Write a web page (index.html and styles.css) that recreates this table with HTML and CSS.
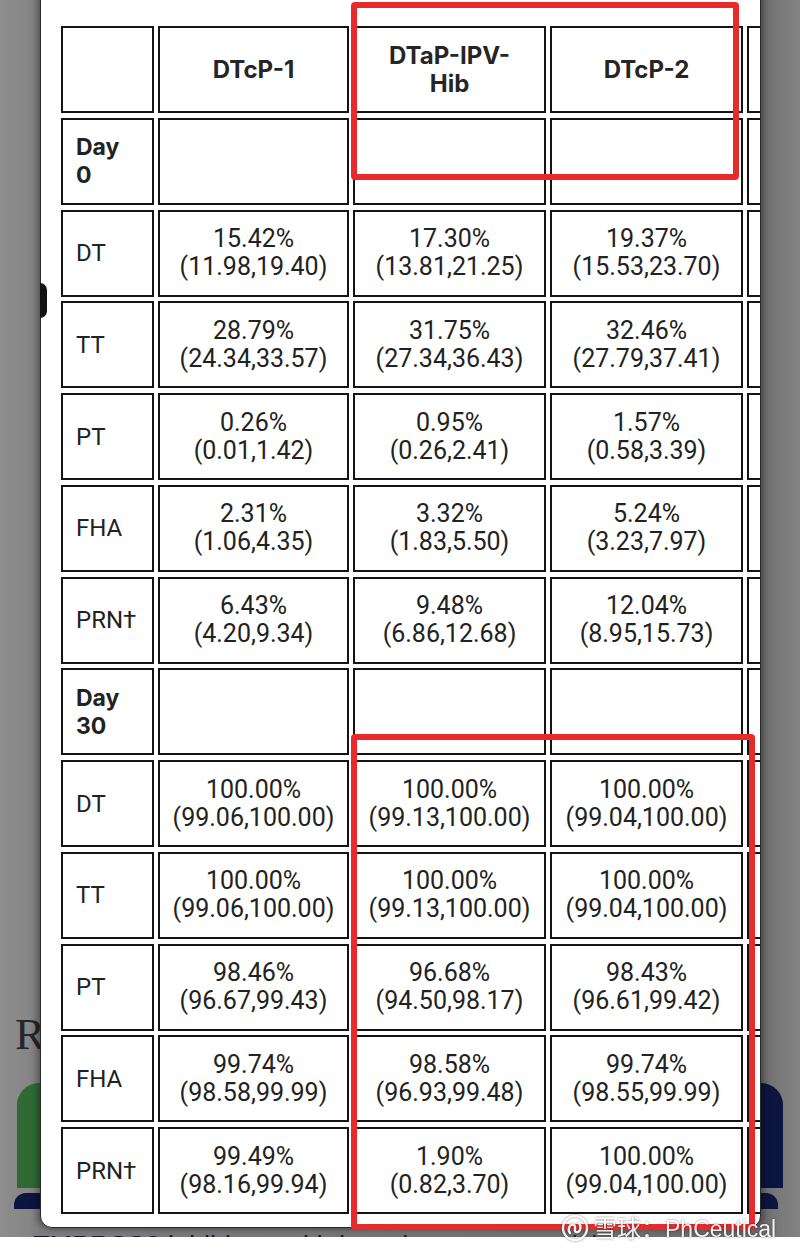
FILE: index.html
```html
<!DOCTYPE html>
<html lang="en">
<head>
<meta charset="utf-8">
<title>Seroresponse table</title>
<link rel="stylesheet" href="styles.css">
</head>
<body>
<div class="screen">
  <div class="page">
    <h2 class="page-title">Results</h2>
    <div class="cards">
      <div class="card card-green"></div>
      <div class="card card-navy"></div>
    </div>
    <div class="bars">
      <div class="bar bar-left"></div>
      <div class="bar bar-right"></div>
    </div>
    <p class="page-text">TMPRSS2 inhibitors with broad-spectrum activity</p>
  </div>

  <div class="modal">
    <div class="grid">
      <div class="cell head"></div>
      <div class="cell head">DTcP-1</div>
      <div class="cell head">DTaP-IPV-<wbr>Hib</div>
      <div class="cell head">DTcP-2</div>
      <div class="cell head"></div>

      <div class="cell label strong">Day<br>0</div>
      <div class="cell"></div><div class="cell"></div><div class="cell"></div><div class="cell"></div>

      <div class="cell label">DT</div>
      <div class="cell val">15.42%<br>(11.98,19.40)</div>
      <div class="cell val">17.30%<br>(13.81,21.25)</div>
      <div class="cell val">19.37%<br>(15.53,23.70)</div>
      <div class="cell"></div>

      <div class="cell label">TT</div>
      <div class="cell val">28.79%<br>(24.34,33.57)</div>
      <div class="cell val">31.75%<br>(27.34,36.43)</div>
      <div class="cell val">32.46%<br>(27.79,37.41)</div>
      <div class="cell"></div>

      <div class="cell label">PT</div>
      <div class="cell val">0.26%<br>(0.01,1.42)</div>
      <div class="cell val">0.95%<br>(0.26,2.41)</div>
      <div class="cell val">1.57%<br>(0.58,3.39)</div>
      <div class="cell"></div>

      <div class="cell label">FHA</div>
      <div class="cell val">2.31%<br>(1.06,4.35)</div>
      <div class="cell val">3.32%<br>(1.83,5.50)</div>
      <div class="cell val">5.24%<br>(3.23,7.97)</div>
      <div class="cell"></div>

      <div class="cell label">PRN†</div>
      <div class="cell val">6.43%<br>(4.20,9.34)</div>
      <div class="cell val">9.48%<br>(6.86,12.68)</div>
      <div class="cell val">12.04%<br>(8.95,15.73)</div>
      <div class="cell"></div>

      <div class="cell label strong">Day<br>30</div>
      <div class="cell"></div><div class="cell"></div><div class="cell"></div><div class="cell"></div>

      <div class="cell label">DT</div>
      <div class="cell val">100.00%<br>(99.06,100.00)</div>
      <div class="cell val">100.00%<br>(99.13,100.00)</div>
      <div class="cell val">100.00%<br>(99.04,100.00)</div>
      <div class="cell"></div>

      <div class="cell label">TT</div>
      <div class="cell val">100.00%<br>(99.06,100.00)</div>
      <div class="cell val">100.00%<br>(99.13,100.00)</div>
      <div class="cell val">100.00%<br>(99.04,100.00)</div>
      <div class="cell"></div>

      <div class="cell label">PT</div>
      <div class="cell val">98.46%<br>(96.67,99.43)</div>
      <div class="cell val">96.68%<br>(94.50,98.17)</div>
      <div class="cell val">98.43%<br>(96.61,99.42)</div>
      <div class="cell"></div>

      <div class="cell label">FHA</div>
      <div class="cell val">99.74%<br>(98.58,99.99)</div>
      <div class="cell val">98.58%<br>(96.93,99.48)</div>
      <div class="cell val">99.74%<br>(98.55,99.99)</div>
      <div class="cell"></div>

      <div class="cell label">PRN†</div>
      <div class="cell val">99.49%<br>(98.16,99.94)</div>
      <div class="cell val">1.90%<br>(0.82,3.70)</div>
      <div class="cell val">100.00%<br>(99.04,100.00)</div>
      <div class="cell"></div>
    </div>
  </div>

  <div class="knob"></div>
  <div class="mark mark-top"></div>
  <div class="mark mark-bottom"></div>
</div>
<div class="bottom-strip"></div>

<div class="watermark">
  <svg class="wm-logo" viewBox="0 0 28 28" width="28" height="28" aria-hidden="true">
    <circle cx="14" cy="14" r="12" fill="none" stroke="#fff" stroke-width="2.4"/>
    <path d="M9 19 C6 15 9 9 13 11 C16 13 12 17 15 18 C19 19 21 13 18 9" fill="none" stroke="#fff" stroke-width="2.4" stroke-linecap="round"/>
  </svg>
  <span class="wm-text">雪球：<span class="wm-latin">PhCeutical</span></span>
</div>
</body>
</html>
```

FILE: styles.css
```css
* { box-sizing: border-box; }

html, body {
  margin: 0;
  padding: 0;
  background: #ffffff;
}

body {
  position: relative;
  width: 800px;
  font-family: Roboto, "Noto Sans", sans-serif;
}

.screen {
  position: relative;
  height: 1237px;
  overflow: hidden;
  background: linear-gradient(90deg, #8d8d8d 0px, #868686 28px, #7d7d7d 40px, #6c6c6c 762px, #7a7a7a 780px, #838383 800px);
}

/* dimmed page behind the dialog */
.page {
  padding: 1008px 14px 0 14px;
}

.page-title {
  margin: 0 0 0 1px;
  font-family: "Liberation Serif", serif;
  font-weight: 400;
  font-size: 45px;
  line-height: 52px;
  color: #262626;
}

.cards {
  display: flex;
  justify-content: space-between;
  margin-top: 23px;
}

.card {
  width: 200px;
  height: 105px;
}

.card-green {
  margin-left: 3px;
  background: #2f6a34;
  border-top-left-radius: 22px;
}

.card-navy {
  margin-right: 3px;
  background: #0c1540;
  border-top-right-radius: 22px;
}

.bars {
  display: flex;
  justify-content: space-between;
  margin-top: 5px;
}

.bar {
  width: 200px;
  height: 16px;
  background: #0c1540;
}

.bar-left { border-top-left-radius: 12px; }
.bar-right { margin-right: 8px; border-top-right-radius: 12px; }

.page-text {
  margin: 22px 0 0 19px;
  font-family: "Liberation Sans", sans-serif;
  font-size: 27px;
  line-height: 30px;
  color: #13193a;
  white-space: nowrap;
}

/* dialog */
.modal {
  position: absolute;
  left: 40px;
  top: -20px;
  width: 721px;
  height: 1248px;
  background: #ffffff;
  border: 1px solid #2a2a2a;
  border-radius: 12px;
  box-shadow: -3px 0 6px rgba(0, 0, 0, 0.3), 3px 0 6px rgba(0, 0, 0, 0.3);
  overflow: hidden;
  padding: 45px 0 0 20px;
}

.grid {
  display: grid;
  grid-template-columns: 93px 191px 193px 193px 193px;
  grid-auto-rows: 87px;
  column-gap: 4px;
  row-gap: 4.75px;
  width: max-content;
}

.cell {
  border: 2px solid #141414;
  display: flex;
  align-items: center;
  justify-content: center;
  text-align: center;
  color: #222222;
  font-family: Roboto, "Noto Sans", sans-serif;
  font-size: 25px;
  line-height: 28px;
}

.head {
  font-family: Inter, "Noto Sans", sans-serif;
  font-weight: 700;
  font-size: 24px;
  line-height: 28px;
  padding: 0 16px;
  color: #252525;
}

.label {
  justify-content: flex-start;
  text-align: left;
  padding-left: 13px;
  font-size: 24px;
}

.label.strong {
  font-family: Inter, "Noto Sans", sans-serif;
  font-weight: 700;
  font-size: 23px;
  line-height: 28px;
}

.val {
  white-space: nowrap;
}

/* knob peeking from the dialog edge */
.knob {
  position: absolute;
  left: 40px;
  top: 283px;
  width: 7px;
  height: 35px;
  background: #121212;
  border-radius: 0 18px 18px 0;
}

/* red annotation frames */
.mark {
  position: absolute;
  border: 6px solid #e82a2c;
  border-radius: 4px;
}

.mark-top {
  left: 351px;
  top: 2px;
  width: 388px;
  height: 178px;
}

.mark-bottom {
  left: 351px;
  top: 734px;
  width: 404px;
  height: 496px;
}

/* watermark */
.watermark {
  position: absolute;
  left: 561px;
  top: 1212px;
  display: flex;
  align-items: center;
  gap: 4px;
  opacity: 0.9;
  filter: drop-shadow(0 0 1px rgba(0, 0, 0, 0.55));
}

.wm-text {
  font-family: "Noto Sans CJK SC", sans-serif;
  font-size: 24px;
  line-height: 30px;
  color: #ffffff;
  white-space: nowrap;
}

.wm-latin {
  font-family: "Liberation Sans", sans-serif;
  font-size: 23px;
}

.bottom-strip {
  height: 16px;
  background: #ffffff;
}
```
